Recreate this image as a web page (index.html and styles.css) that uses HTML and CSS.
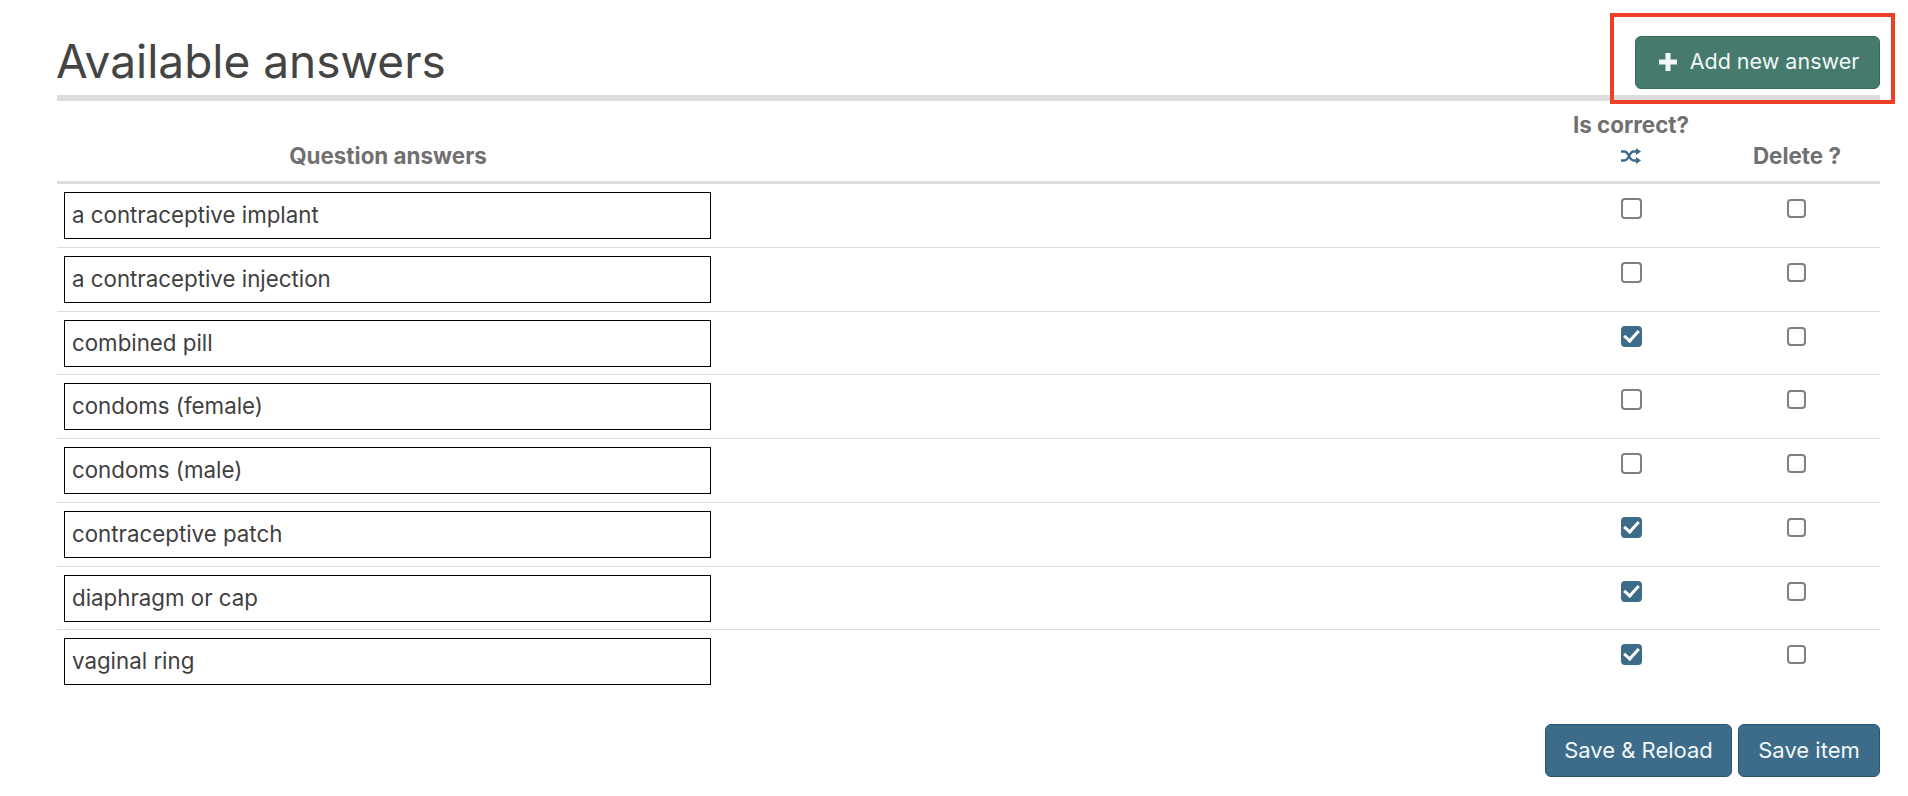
FILE: index.html
```html
<!DOCTYPE html>
<html>
<head>
    <title>Available answers</title>
    <link rel="stylesheet" href="styles.css">
</head>
<body>
    <div class="section-head">
        <h1>Available answers</h1>
        <button class="btn btn-green" type="button">
            <svg class="plus" viewBox="0 0 18 18"><path d="M6.5 0h5v6.5H18v5h-6.5V18h-5v-6.5H0v-5h6.5z"/></svg>
            Add new answer
            <span class="highlight"></span>
        </button>
    </div>

    <table class="answers">
        <thead>
            <tr>
                <th class="col-answer">Question answers</th>
                <th></th>
                <th class="col-check">
                    <div class="th-top">Is correct?</div>
                    <svg class="shuffle" viewBox="0 0 20 16"><path d="M0 3.5h3.5c4.5 0 4.5 9 9 9H15M0 12.5h3.5c4.5 0 4.5-9 9-9H15"/><path class="tip" d="M15 0l5 3.5-5 3.5zM15 9l5 3.5-5 3.5z"/></svg>
                </th>
                <th class="col-check">Delete ?</th>
            </tr>
        </thead>
        <tbody>
            <tr>
                <td><input class="answer-input" type="text" value="a contraceptive implant"></td>
                <td></td>
                <td class="check"><input class="cb cb-lg" type="checkbox"></td>
                <td class="check"><input class="cb" type="checkbox"></td>
            </tr>
            <tr>
                <td><input class="answer-input" type="text" value="a contraceptive injection"></td>
                <td></td>
                <td class="check"><input class="cb cb-lg" type="checkbox"></td>
                <td class="check"><input class="cb" type="checkbox"></td>
            </tr>
            <tr>
                <td><input class="answer-input" type="text" value="combined pill"></td>
                <td></td>
                <td class="check"><input class="cb cb-lg" type="checkbox" checked></td>
                <td class="check"><input class="cb" type="checkbox"></td>
            </tr>
            <tr>
                <td><input class="answer-input" type="text" value="condoms (female)"></td>
                <td></td>
                <td class="check"><input class="cb cb-lg" type="checkbox"></td>
                <td class="check"><input class="cb" type="checkbox"></td>
            </tr>
            <tr>
                <td><input class="answer-input" type="text" value="condoms (male)"></td>
                <td></td>
                <td class="check"><input class="cb cb-lg" type="checkbox"></td>
                <td class="check"><input class="cb" type="checkbox"></td>
            </tr>
            <tr>
                <td><input class="answer-input" type="text" value="contraceptive patch"></td>
                <td></td>
                <td class="check"><input class="cb cb-lg" type="checkbox" checked></td>
                <td class="check"><input class="cb" type="checkbox"></td>
            </tr>
            <tr>
                <td><input class="answer-input" type="text" value="diaphragm or cap"></td>
                <td></td>
                <td class="check"><input class="cb cb-lg" type="checkbox" checked></td>
                <td class="check"><input class="cb" type="checkbox"></td>
            </tr>
            <tr>
                <td><input class="answer-input" type="text" value="vaginal ring"></td>
                <td></td>
                <td class="check"><input class="cb cb-lg" type="checkbox" checked></td>
                <td class="check"><input class="cb" type="checkbox"></td>
            </tr>
        </tbody>
    </table>

    <div class="actions">
        <button class="btn btn-blue btn-reload" type="button">Save &amp; Reload</button>
        <button class="btn btn-blue btn-save" type="button">Save item</button>
    </div>
</body>
</html>
```

FILE: styles.css
```css
body {
    font-family: Inter, "Liberation Sans", sans-serif;
    margin: 0;
    padding: 36px 28px 0 57px;
    background: #fff;
    color: #3f3f3f;
    overflow: hidden;
}
.section-head {
    display: flex;
    justify-content: space-between;
    align-items: flex-end;
    border-bottom: 6px solid #ddd;
    padding-bottom: 6px;
}
h1 {
    font-size: 46px;
    font-weight: 400;
    line-height: 53px;
    margin: -1px 0 1px -1px;
    color: #444;
}
.btn {
    font-family: inherit;
    font-size: 22px;
    line-height: 25px;
    color: #f2f7f8;
    border-radius: 6px;
    height: 53px;
    cursor: pointer;
    position: relative;
    padding: 0;
}
.btn-green {
    display: flex;
    align-items: center;
    justify-content: center;
    gap: 13px;
    width: 245px;
    padding: 0 0 2px 3px;
    font-size: 21.5px;
    background-color: #457a6c;
    border: 1px solid #3a6a5d;
}
.btn-blue {
    background-color: #3d6c8a;
    border: 1px solid #2d5570;
}
.btn-reload {
    width: 187px;
}
.btn-save {
    width: 142px;
}
.plus {
    width: 18px;
    height: 18px;
    fill: #f2f7f8;
}
.highlight {
    position: absolute;
    top: -24px;
    left: -26px;
    right: -16px;
    bottom: -16px;
    border: 4px solid #ee4027;
}
.answers {
    width: 100%;
    border-collapse: collapse;
    table-layout: fixed;
}
.answers th {
    font-size: 22.4px;
    font-weight: 700;
    color: #707070;
    text-align: center;
    vertical-align: bottom;
    padding: 11px 0 13px;
    line-height: 25px;
    border-bottom: 3px solid #ddd;
}
.col-answer {
    width: 662px;
}
.col-check {
    width: 166px;
}
.th-top {
    margin-bottom: 11px;
}
.shuffle {
    display: block;
    width: 20px;
    height: 16px;
    margin: 0 auto 4px;
    fill: none;
    stroke: #3d6c8a;
    stroke-width: 2.4;
}
.shuffle .tip {
    fill: #3d6c8a;
    stroke: none;
}
.answers td {
    padding: 8px 0 7.75px;
    border-bottom: 1px solid #ddd;
    height: 47px;
    vertical-align: top;
}
.answers tbody tr:last-child td {
    border-bottom: none;
}
.answer-input {
    display: block;
    box-sizing: border-box;
    width: 647px;
    height: 47px;
    margin-left: 7px;
    padding: 0 7px 2px;
    border: 1px solid #000;
    border-radius: 0;
    outline: none;
    font-family: inherit;
    font-size: 22.3px;
    color: #3f3f3f;
}
.check {
    text-align: center;
}
.cb {
    appearance: none;
    -webkit-appearance: none;
    display: block;
    box-sizing: border-box;
    position: relative;
    width: 19px;
    height: 19px;
    margin: 7px 74px 0 auto;
    border: 2px solid #808080;
    border-radius: 4px;
    background: #fff;
}
.cb-lg {
    width: 21px;
    height: 21px;
    margin: 6px auto 0;
}
.cb:checked {
    background: #3d6c8a;
    border-color: #3d6c8a;
}
.cb:checked::after {
    content: "";
    position: absolute;
    left: 4px;
    top: -1px;
    width: 6px;
    height: 12px;
    border: solid #fff;
    border-width: 0 3.5px 3.5px 0;
    transform: rotate(42deg);
}
.actions {
    display: flex;
    justify-content: flex-end;
    gap: 6px;
    margin-top: 31px;
}
```
